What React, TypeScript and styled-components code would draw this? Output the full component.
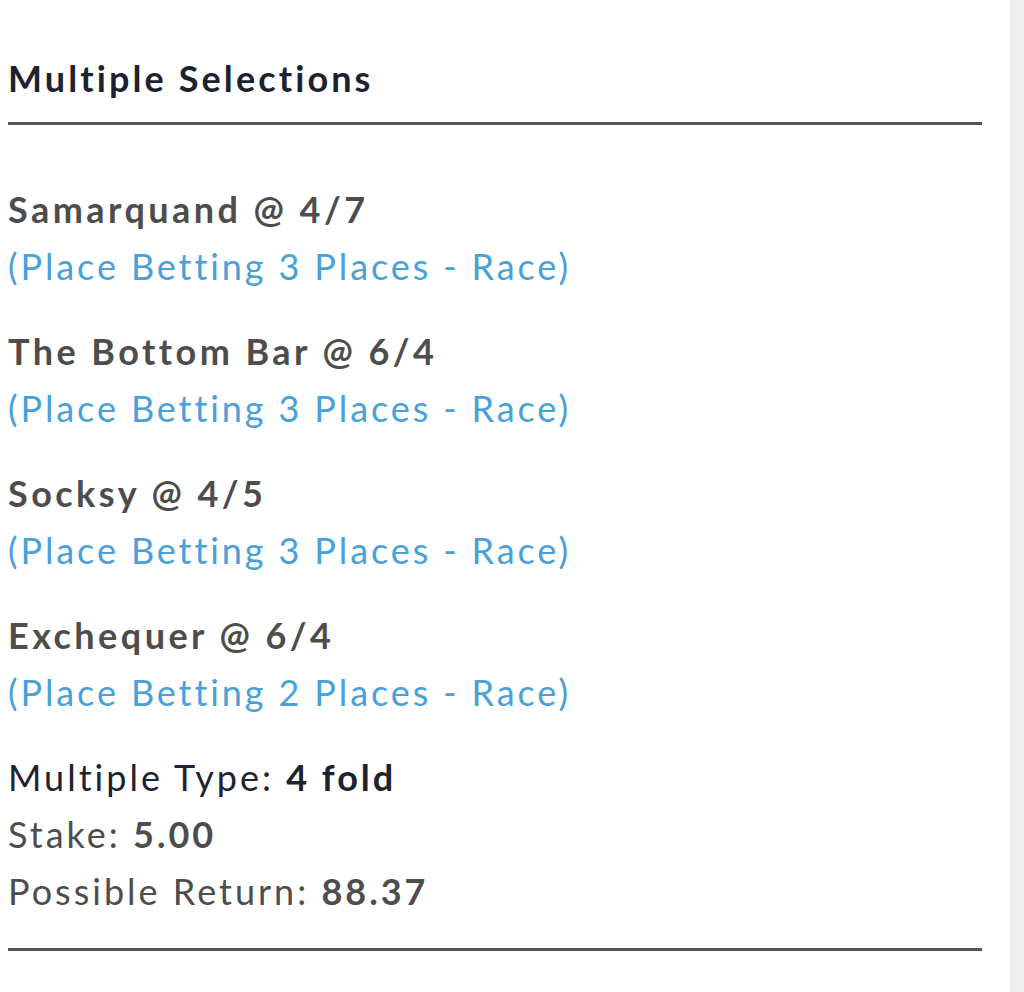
import React from "react";
import styled, { createGlobalStyle } from "styled-components";

const Global = createGlobalStyle`
  html, body { margin: 0; padding: 0; background: #ffffff; }
  body { font-family: Lato, "Open Sans", sans-serif; }
`;

const Page = styled.div`
  display: flex;
  min-height: 992px;
`;

const Panel = styled.div`
  flex: 1;
  padding: 50px 28px 0 8px;
`;

const Gutter = styled.div`
  width: 14px;
  background: #eeeeee;
`;

const Heading = styled.div`
  font-size: 36px;
  font-weight: 700;
  line-height: 57px;
  letter-spacing: 3.1px;
  color: #1e2230;
  padding-bottom: 15px;
  white-space: nowrap;
`;

const Rule = styled.div`
  height: 3px;
  background: #555;
`;

const List = styled.div`
  display: flex;
  flex-direction: column;
  gap: 28px;
  padding: 56px 0 28px;
`;

const Selection = styled.div`
  display: flex;
  flex-direction: column;
`;

const Name = styled.div`
  font-size: 36px;
  font-weight: 700;
  line-height: 57px;
  letter-spacing: 3.45px;
  color: #4d4d4d;
  white-space: nowrap;
`;

const Market = styled.div`
  font-size: 36px;
  line-height: 57px;
  letter-spacing: 2.9px;
  color: #4aa0d8;
  white-space: nowrap;
`;

const Summary = styled.div`
  display: flex;
  flex-direction: column;
`;

const Line = styled.div<{ $dark?: boolean }>`
  font-size: 36px;
  line-height: 57px;
  letter-spacing: 3px;
  color: ${(p) => (p.$dark ? "#1e2230" : "#4d4d4d")};
  white-space: nowrap;
  b { font-weight: 700; }
`;

const selections = [
  { name: "Samarquand @ 4/7", market: "(Place Betting 3 Places - Race)" },
  { name: "The Bottom Bar @ 6/4", market: "(Place Betting 3 Places - Race)" },
  { name: "Socksy @ 4/5", market: "(Place Betting 3 Places - Race)" },
  { name: "Exchequer @ 6/4", market: "(Place Betting 2 Places - Race)" },
];

export default function App() {
  return (
    <Page>
      <Global />
      <Panel>
        <Heading>Multiple Selections</Heading>
        <Rule />
        <List>
          {selections.map((s) => (
            <Selection key={s.name}>
              <Name>{s.name}</Name>
              <Market>{s.market}</Market>
            </Selection>
          ))}
          <Summary>
            <Line $dark>
              Multiple Type: <b>4 fold</b>
            </Line>
            <Line>
              Stake: <b>5.00</b>
            </Line>
            <Line>
              Possible Return: <b>88.37</b>
            </Line>
          </Summary>
        </List>
        <Rule />
      </Panel>
      <Gutter />
    </Page>
  );
}
